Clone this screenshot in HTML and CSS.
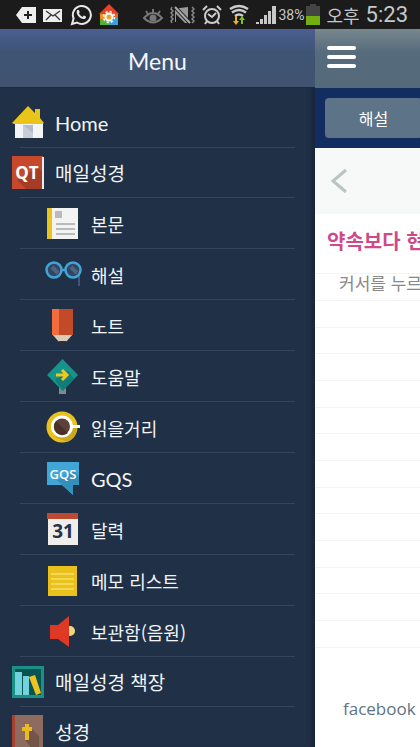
FILE: index.html
```html
<!DOCTYPE html>
<html lang="ko">
<head>
<meta charset="utf-8">
<meta name="viewport" content="width=device-width, initial-scale=1">
<title>Menu</title>
<link rel="stylesheet" href="styles.css">
</head>
<body>
<div class="statusbar">
  <div class="status-group">
    <svg width="20" height="20" viewBox="0 0 20 20"><path d="M0 10 6 2H20V18H6z" fill="#eee"/><path d="M12 6v8M8 10h8" stroke="#222" stroke-width="2"/></svg>
    <svg width="20" height="20" viewBox="0 0 20 20"><path d="M0 4h19v13H0z" fill="#eee"/><path d="m3 6 7 5 7-5M3 15l5-5M17 15l-5-5" fill="none" stroke="#333" stroke-width="1.3"/></svg>
    <svg width="22" height="22" viewBox="0 0 22 22"><path d="m2 20 1.600-5.500A9 9 0 1 1 7 18.500z" fill="none" stroke="#e8e8e8" stroke-width="2"/><path d="M7 6.500c1-1.500 2-.5 2.700 1.500L9 9.500c.8 1.600 2 2.700 3.500 3.400l1.300-1.300c2.500.8 2.700 1.500 1.600 2.800C12 17 5 10.500 7 6.500z" fill="#e8e8e8"/></svg>
    <svg width="20" height="22" viewBox="0 0 20 22"><path d="M1 9h9v12H1z" fill="#5ab030"/><path d="M1 9h5v6H1z" fill="#f09020"/><path d="M10 9h9v12h-9z" fill="#e8612a"/><path d="M10 14h9v7h-9z" fill="#39a0dc"/><path d="M0 10 10 0l10 10z" fill="#e8412a"/><circle cx="10" cy="13" r="3.500" fill="#f0a030" stroke="#fff" stroke-width="2"/><circle cx="10" cy="13" r="5.500" fill="none" stroke="#fff" stroke-width="1.600" stroke-dasharray="2.200 2.120"/></svg>
  </div>
  <div class="status-group status-right">
    <div class="status-group">
      <svg width="20" height="20" viewBox="0 0 20 20"><path d="M1 13q9-10 18 0-9 9-18 0zM10 8V4M5 9 3 6M15 9l2-3" fill="none" stroke="#777" stroke-width="2"/><circle cx="10" cy="13" r="3.500" fill="#777"/></svg>
      <svg width="25" height="20" viewBox="0 0 25 20"><path d="M6 3h4l8-1v16h-3L6 9v8H5V3z" fill="#999"/><path d="m5 2 15 16" stroke="#1b1b1b" stroke-width="4"/><path d="m5 2 15 16" stroke="#aaa" stroke-width="2"/><path d="m2 2-1 2 2 2-2 2 2 2-2 2 2 2-2 2 1 2M22 2l2 2-2 2 2 2-2 2 2 2-2 2 2 2-2 2" fill="none" stroke="#888" stroke-width="1.500"/></svg>
      <svg width="20" height="20" viewBox="0 0 20 20"><circle cx="10" cy="11" r="7" fill="none" stroke="#ccc" stroke-width="2"/><path d="m6 9 4 3 4-4M1 5l4-4M19 5l-4-4M5 16l-2 3M15 16l2 3" fill="none" stroke="#ccc" stroke-width="2"/></svg>
      <svg width="20" height="22" viewBox="0 0 20 22"><path d="M1 5q9-6 18 0M3 8.500q7-5 14 0M6 12q4-3 8 0" fill="none" stroke="#ccc" stroke-width="2.500"/><path d="M6 12v5H4l3 4 3-4H8v-5z" fill="#e4b41c"/><path d="M12 20v-4h-2l3-4 3 4h-2v4z" fill="#79c31c"/></svg>
      <svg width="20" height="20" viewBox="0 0 20 20"><path d="M0 19v-2h3v2zM4 19v-5h3v5zM8 19v-9h3v9zM12 19V6h3v13zM16 19V1h4v18z" fill="#c8c8c8"/></svg>
    </div>
    <span class="percent">38%</span>
    <svg width="14" height="21" viewBox="0 0 14 21"><path d="M4 0h6v2h4v19H0V2h4z" fill="#444"/><path d="M0 12h14v9H0z" fill="#72ae10"/></svg>
    <span class="meridiem">오후</span>
    <span class="clock">5:23</span>
  </div>
</div>
<div class="screen">
  <nav class="drawer">
    <h1 class="drawer-title">Menu</h1>
    <ul class="menu">
      <li class="item"><svg class="icon" viewBox="0 0 32 34"><path d="M3 17h28v15H3z" fill="#f3f4f6"/><path d="M11 19h10v13H11z" fill="#c8ccd8"/><path d="m11 19 10 8v-8z" fill="#b4bbca"/><path d="M0 17 16 0l7 7V3h5v9l4 5-2 1H2z" fill="#eac519"/></svg><a class="label latin" href="#">Home</a></li>
      <li class="item"><svg class="icon" viewBox="0 0 32 34"><path d="M0 0h31v33H0z" fill="#c6492b"/><path d="m26 11 4 5v17H14l-9-9z" fill="#a63c26"/><path d="M30 1h2v32h-2z" fill="#eee"/><text class="qt" x="15" y="23">QT</text></svg><a class="label" href="#">매일성경</a></li>
      <li class="item sub"><svg class="icon" viewBox="0 0 32 34"><path d="M0 1h31v31H0z" fill="#f3f3f1"/><path d="M0 1h5v31H0z" fill="#eac41e"/><path d="M8 4h7v7H8z" fill="#bbb"/><path d="M9 17h19M9 22h19M9 27h19" stroke="#bbb" stroke-width="2"/></svg><a class="label" href="#">본문</a></li>
      <li class="item sub"><svg class="icon wide" viewBox="0 0 36 34"><path d="M34 13v15" stroke="#46527a" stroke-width="2"/><g fill="#304665" stroke="#42a5d6" stroke-width="2.500"><circle cx="9" cy="12" r="7.500"/><circle cx="28" cy="12" r="7.500"/><path d="M16 12h5" fill="none"/></g><path d="m7 9 6 6M26 9l6 6" stroke="#52647b" stroke-width="4"/></svg><a class="label" href="#">해설</a></li>
      <li class="item sub"><svg class="icon" viewBox="0 0 32 34"><path d="M5 0h21v25l-7 8h-7l-7-8z" fill="#d9cdb8"/><path d="M5 0h7v26H5z" fill="#f36c3c"/><path d="M12 0h14v26H12z" fill="#c34a29"/><path d="M11 32h9l-4 4z" fill="#302d38"/></svg><a class="label" href="#">노트</a></li>
      <li class="item sub"><svg class="icon" viewBox="0 0 32 34"><path d="M12 25h7v9h-7z" fill="#818890"/><path d="m15.500-1 15.500 16-15.500 16L0 15z" fill="#16938a"/><path d="m21 11 6 8-11 12-8-11z" fill="#117c78"/><path d="M9 15h11m-5-5 5 5-5 5" fill="none" stroke="#edc91d" stroke-width="3"/></svg><a class="label" href="#">도움말</a></li>
      <li class="item sub"><svg class="icon" viewBox="0 0 32 34"><circle cx="15" cy="16" r="15.500" fill="#e9c21b"/><path d="m23 9 7 9q-1 10-10 13l-12-5z" fill="#cda71b"/><path d="M24 14h9v3h-9z" fill="#fff"/><circle cx="15" cy="15.500" r="9.500" fill="#5d4037" stroke="#fff" stroke-width="3"/><path d="m9 10 12 12A8.500 8.500 0 0 1 9 10" fill="#493329"/></svg><a class="label" href="#">읽을거리</a></li>
      <li class="item sub"><svg class="icon" viewBox="0 0 32 34"><path d="M0 0h32v23h-6v10L15 23H0z" fill="#40a6d8"/><path d="m27 9 5 5v9h-6v10L15 23l-5-5z" fill="#358fbd"/><text class="gqs" x="16" y="17">GQS</text></svg><a class="label latin" href="#">GQS</a></li>
      <li class="item sub"><svg class="icon" viewBox="0 0 32 34"><path d="M1 1h30v31H1z" fill="#f0eeeb"/><path d="M0 0h31v6H0z" fill="#bd4930"/><text class="date" x="16" y="25">31</text></svg><a class="label" href="#">달력</a></li>
      <li class="item sub"><svg class="icon" viewBox="0 0 32 34"><path d="M1 2h29v30H1z" fill="#eac01c"/><path d="M4 10h23M4 15h23M4 20h23M4 25h23" stroke="#f6df69" stroke-width="1.500"/></svg><a class="label" href="#">메모 리스트</a></li>
      <li class="item sub"><svg class="icon" viewBox="0 0 32 34"><circle cx="23" cy="16" r="5" fill="#f1d978"/><path d="M3 10h8L22 1v31l-11-8H3z" fill="#df3825"/></svg><a class="label" href="#">보관함(음원)</a></li>
      <li class="item"><svg class="icon" viewBox="0 0 32 34"><path d="M0 1h32v32H0z" fill="#1a9188"/><path d="M3 4h26v26H3z" fill="#08554f"/><path d="M3 7h7v23H3zM11 11h6v19h-6z" fill="#72d2dd"/><path d="m17 12 6-2 6 18-5 2z" fill="#edc222"/></svg><a class="label" href="#">매일성경 책장</a></li>
      <li class="item"><svg class="icon" viewBox="0 0 32 34"><path d="M0 0h31v34H0z" fill="#8e6b5f"/><path d="m19 13 8 8v13H20l-7-9z" fill="#745449"/><path d="M0 0h3v34H0z" fill="#a5412e"/><path d="M15 9v16M10 14h10" stroke="#eabc1b" stroke-width="4"/></svg><a class="label" href="#">성경</a></li>
    </ul>
  </nav>
  <main class="page">
    <header class="page-header"><button class="burger" aria-label="메뉴"><span></span><span></span><span></span></button></header>
    <div class="tabs"><button class="tab">해설</button></div>
    <div class="pager"><button class="prev" aria-label="이전"><svg width="18" height="26" viewBox="0 0 18 26"><path d="M16 2 3 13l13 11" fill="none" stroke="#b9c5c3" stroke-width="3"/></svg></button></div>
    <h2 class="title">약속보다 현</h2>
    <div class="note"><p>커서를 누르</p></div>
    <footer class="footer"><a href="#">facebook</a></footer>
  </main>
</div>
</body>
</html>
```
FILE: styles.css
```css
* { box-sizing: border-box; }
body {
  margin: 0;
  height: 100vh;
  overflow: hidden;
  display: flex;
  flex-direction: column;
  font-family: "Noto Sans CJK KR", sans-serif;
  background: #203047;
}
button { border: 0; padding: 0; background: none; font: inherit; }
a { color: inherit; text-decoration: none; }
svg { flex: none; display: block; }

.statusbar {
  flex: none;
  height: 29px;
  padding: 0 12px 0 16px;
  display: flex;
  justify-content: space-between;
  align-items: center;
  background: #1b1b1b;
  color: #c8c8c8;
}
.status-group { display: flex; align-items: center; gap: 7px; }
.status-right { gap: 6px; }
.percent { font: 14px Roboto, sans-serif; margin: 0 -4px; }
.meridiem { font-size: 18px; line-height: 24px; }
.clock { font: 22px Roboto, sans-serif; }

.screen { flex: 1; min-height: 0; display: flex; }
.drawer { flex: 3; min-width: 0; background: #203047; box-shadow: inset -6px 0 5px -3px #16243a; }
.page { flex: 1; min-width: 0; overflow: hidden; background: #fff; white-space: nowrap; }

.drawer-title {
  margin: 0;
  height: 59px;
  padding-top: 4px;
  border-bottom: 1px solid #17294f;
  background: linear-gradient(#4a5f90, #3f5474 40%, #405370);
  color: #f4f6fa;
  font: 23px/56px Lato, sans-serif;
  text-align: center;
}
.menu { margin: 0; padding: 10px 20px 0 12px; list-style: none; }
.item {
  height: 50px;
  display: flex;
  align-items: center;
  gap: 11px;
  font-size: 19px;
  background: linear-gradient(#35455b, #35455b) 8px 100% / 100% 1px no-repeat;
}
.sub { height: 51px; padding-left: 35px; gap: 12px; font-size: 18px; }
.icon { width: 32px; height: 34px; overflow: visible; }
.wide { width: 36px; margin: 0 -2px; }
.label { color: #f1f4f8; line-height: 26px; white-space: nowrap; }
.latin { font-family: Lato, sans-serif; font-size: 20px; }
.qt { font: bold 17px "Open Sans", sans-serif; fill: #fff; text-anchor: middle; }
.gqs { font: 600 13px "Open Sans", sans-serif; fill: #fff; text-anchor: middle; }
.date { font: bold 19px "Open Sans", sans-serif; fill: #283247; text-anchor: middle; }

.page-header { height: 59px; padding: 17px 12px; background: linear-gradient(#77878e, #566b7b 40%, #546979); }
.burger { width: 29px; display: grid; gap: 5px; }
.burger span { height: 4px; border-radius: 2px; background: #fff; }
.tabs { height: 60px; padding: 10px 10px; background: #122d60; }
.tab { width: 97px; height: 40px; border-radius: 4px; background: #5d7388; color: #fff; font-size: 16px; }
.pager { height: 66px; padding: 20px 15px; background: #f7f9f8; }
.title { margin: 0; padding: 0 12px; height: 59px; color: #cf4889; font-size: 20px; line-height: 54px; }
.note {
  height: 375px;
  padding: 0 24px;
  background: repeating-linear-gradient(#f4f4f4 0 1px, #fff 1px 27px, #f4f4f4 27px 28px, #fff 28px 54px, #f4f4f4 54px 55px, #fff 55px 80px);
  color: #888;
  font-size: 17px;
}
.note p { margin: 0; line-height: 20px; }
.footer { padding: 47px 28px 0; color: #5f7482; font: 17px/28px "Open Sans", sans-serif; }
```
